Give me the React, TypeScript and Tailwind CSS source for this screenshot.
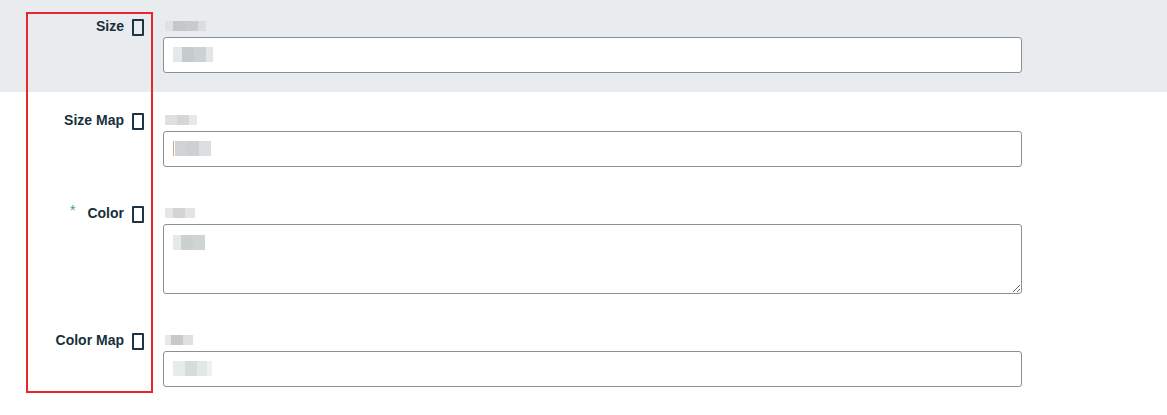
import React from "react";

type Cell = { w: number; c: string };

type Field = {
  label: string;
  required?: boolean;
  multiline?: boolean;
  hint: Cell[];
  value: Cell[];
  caret?: boolean;
};

const fields: Field[] = [
  {
    label: "Size",
    hint: [
      { w: 8, c: "#dfe1e2" },
      { w: 13, c: "#c6c7c8" },
      { w: 12, c: "#c9cacb" },
      { w: 8, c: "#dadcdd" },
    ],
    value: [
      { w: 9, c: "#e4e8e8" },
      { w: 12, c: "#c6cccc" },
      { w: 12, c: "#ccd1d1" },
      { w: 7, c: "#e2e6e6" },
    ],
  },
  {
    label: "Size Map",
    hint: [
      { w: 12, c: "#e0e0e0" },
      { w: 12, c: "#d6d6d6" },
      { w: 8, c: "#e8e8e8" },
    ],
    value: [
      { w: 12, c: "#d0d3d3" },
      { w: 12, c: "#cdd0d0" },
      { w: 12, c: "#dcdfdf" },
    ],
    caret: true,
  },
  {
    label: "Color",
    required: true,
    multiline: true,
    hint: [
      { w: 8, c: "#e6e6e6" },
      { w: 12, c: "#d4d4d4" },
      { w: 10, c: "#e4e4e4" },
    ],
    value: [
      { w: 8, c: "#e8e8e8" },
      { w: 12, c: "#cbd0d0" },
      { w: 12, c: "#cfd4d4" },
    ],
  },
  {
    label: "Color Map",
    hint: [
      { w: 6, c: "#e8e8e8" },
      { w: 12, c: "#c9c9c9" },
      { w: 10, c: "#e0e0e0" },
    ],
    value: [
      { w: 12, c: "#e8ebeb" },
      { w: 12, c: "#d6dcdc" },
      { w: 10, c: "#e3e7e7" },
      { w: 5, c: "#eff1f1" },
    ],
  },
];

const Mosaic: React.FC<{ cells: Cell[]; h: number }> = ({ cells, h }) => (
  <div className="flex">
    {cells.map((cell, i) => (
      <span
        key={i}
        className="block"
        style={{ width: cell.w, height: h, background: cell.c }}
      />
    ))}
  </div>
);

const Row: React.FC<{ field: Field; first?: boolean }> = ({ field, first }) => (
  <div
    className={`flex ${
      first ? "bg-[#e9ecee] pt-[17px] pb-[19px]" : "pt-[19px] pb-[18px]"
    }`}
  >
    <div className="w-[163px] shrink-0 h-[18px] flex items-center justify-end pr-[19px]">
      {field.required && (
        <span className="text-[#3a9aa6] text-[14px] mr-[12px] -mt-[5px]">*</span>
      )}
      <span className="font-bold text-[14px] text-[#17303b]">{field.label}</span>
      <span className="ml-[8px] mt-[2px] inline-block w-[12px] h-[17px] border-2 border-[#1f3440] rounded-[1px]" />
    </div>
    <div className="w-[859px] shrink-0 flex flex-col">
      <div className="h-[18px] flex items-center pl-[2px]">
        <Mosaic cells={field.hint} h={10} />
      </div>
      <div
        className={`mt-[2px] relative bg-white border border-[#8b9095] rounded-[3px] ${
          field.multiline ? "h-[70px]" : "h-[36px]"
        }`}
      >
        {field.multiline ? (
          <textarea
            className="absolute inset-0 w-full h-full bg-transparent outline-none resize-y"
            defaultValue=""
          />
        ) : null}
        <div
          className={`absolute left-[9px] flex items-center ${
            field.multiline ? "top-[10px]" : "top-[9px]"
          }`}
        >
          {field.caret && <span className="block w-[1px] h-[15px] bg-[#e0a070] mr-[1px]" />}
          <Mosaic cells={field.value} h={15} />
        </div>
      </div>
    </div>
  </div>
);

const App: React.FC = () => {
  return (
    <div className="relative w-[1167px] h-[415px] bg-white overflow-hidden font-['Liberation_Sans',Arial,sans-serif]">
      {fields.map((f, i) => (
        <Row key={f.label} field={f} first={i === 0} />
      ))}
      <div className="absolute left-[26px] top-[12px] w-[127px] h-[381px] border-2 border-[#e8262b] pointer-events-none" />
    </div>
  );
};

export default App;
